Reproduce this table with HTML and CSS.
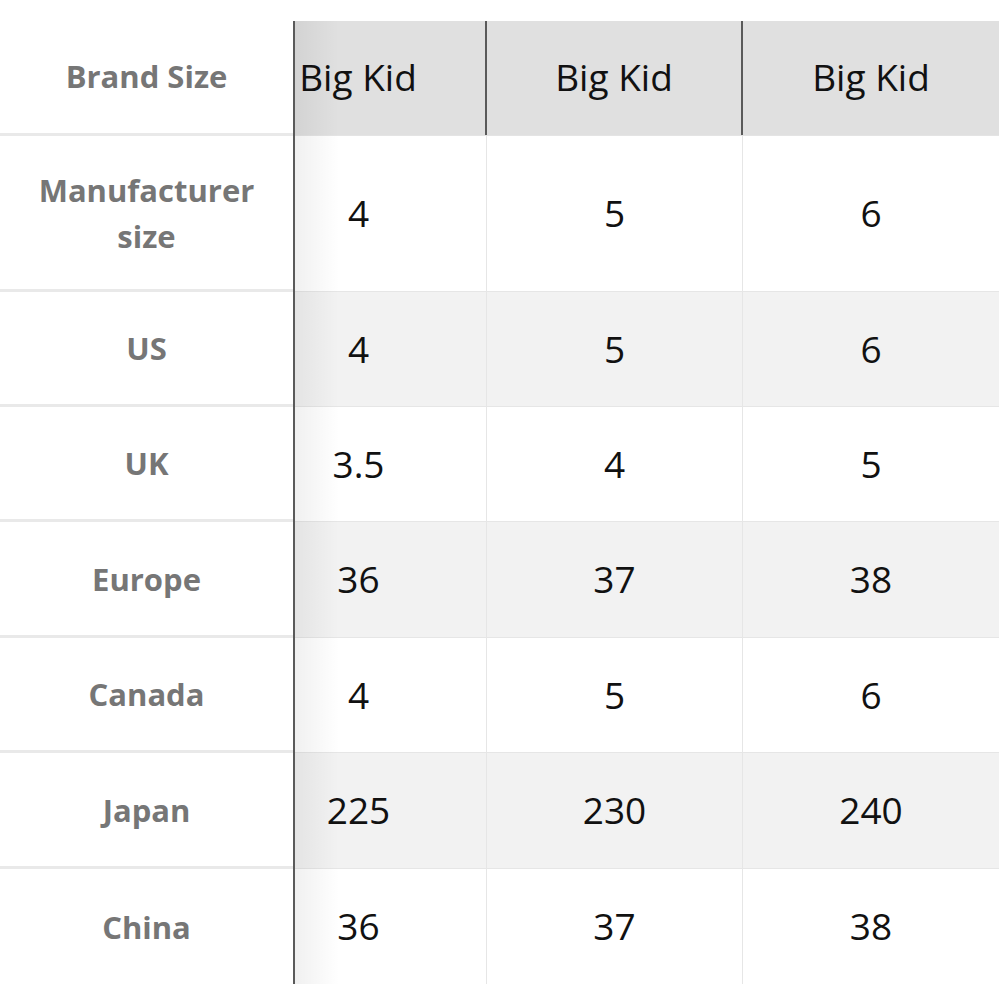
FILE: index.html
```html
<!DOCTYPE html>
<html lang="en">
<head>
<meta charset="utf-8">
<title>Size chart</title>
<link rel="stylesheet" href="styles.css">
</head>
<body>
<div class="chart">
  <div class="labels">
    <div class="lab head">Brand Size</div>
    <div class="lab tall">Manufacturer<br>size</div>
    <div class="lab">US</div>
    <div class="lab">UK</div>
    <div class="lab r116">Europe</div>
    <div class="lab">Canada</div>
    <div class="lab r116">Japan</div>
    <div class="lab last">China</div>
  </div>
  <div class="data">
    <div class="grid">
      <div class="row head"><div class="cell">Big Kid</div><div class="cell">Big Kid</div><div class="cell">Big Kid</div></div>
      <div class="row tall"><div class="cell">4</div><div class="cell">5</div><div class="cell">6</div></div>
      <div class="row alt"><div class="cell">4</div><div class="cell">5</div><div class="cell">6</div></div>
      <div class="row"><div class="cell">3.5</div><div class="cell">4</div><div class="cell">5</div></div>
      <div class="row alt r116"><div class="cell">36</div><div class="cell">37</div><div class="cell">38</div></div>
      <div class="row"><div class="cell">4</div><div class="cell">5</div><div class="cell">6</div></div>
      <div class="row alt r116"><div class="cell">225</div><div class="cell">230</div><div class="cell">240</div></div>
      <div class="row last"><div class="cell">36</div><div class="cell">37</div><div class="cell">38</div></div>
    </div>
  </div>
</div>
</body>
</html>
```
FILE: styles.css
```css
html, body {
  margin: 0;
  padding: 0;
  background: #ffffff;
}
body {
  font-family: "Open Sans", "Noto Sans", sans-serif;
}
.chart {
  display: flex;
  margin-top: 21px;
  width: 1000px;
}
.labels {
  width: 293px;
  flex: none;
  border-right: 2px solid #5a5a5a;
  display: flex;
  flex-direction: column;
}
.lab {
  height: 115px;
  box-sizing: border-box;
  border-bottom: 3px solid #e9e9e9;
  display: flex;
  align-items: center;
  justify-content: center;
  text-align: center;
  font-weight: 700;
  font-size: 31px;
  line-height: 46px;
  color: #767676;
}
.lab.head { height: 115px; padding-bottom: 2px; }
.lab.tall { height: 156px; }
.lab.r116 { height: 116px; }
.lab.last { border-bottom: none; }

.data {
  flex: 1;
  overflow: hidden;
  position: relative;
}
.data::after {
  content: "";
  position: absolute;
  left: 0;
  top: 0;
  bottom: 0;
  width: 44px;
  background: linear-gradient(to right, rgba(0,0,0,0.06), rgba(0,0,0,0));
  pointer-events: none;
}
.grid {
  margin-left: -64px;
  width: 768px;
  display: flex;
  flex-direction: column;
}
.row {
  display: grid;
  grid-template-columns: 256px 256px 256px;
  height: 115px;
  box-sizing: border-box;
  border-bottom: 1px solid #e6e6e6;
  background: #ffffff;
}
.row.head {
  background: #e0e0e0;
  height: 115px;
  border-bottom: 1px solid #e4e4e4;
}
.row.tall { height: 156px; }
.row.r116 { height: 116px; }
.row.alt { background: #f2f2f2; }
.row.last { border-bottom: none; }
.cell {
  display: flex;
  align-items: center;
  justify-content: center;
  font-size: 37px;
  color: #111111;
  border-right: 1px solid #e6e6e6;
  padding-bottom: 2px;
}
.row.head .cell {
  border-right: 2px solid #5a5a5a;
  padding-bottom: 4px;
}
.row .cell:last-child,
.row.head .cell:last-child {
  border-right: none;
}
```
